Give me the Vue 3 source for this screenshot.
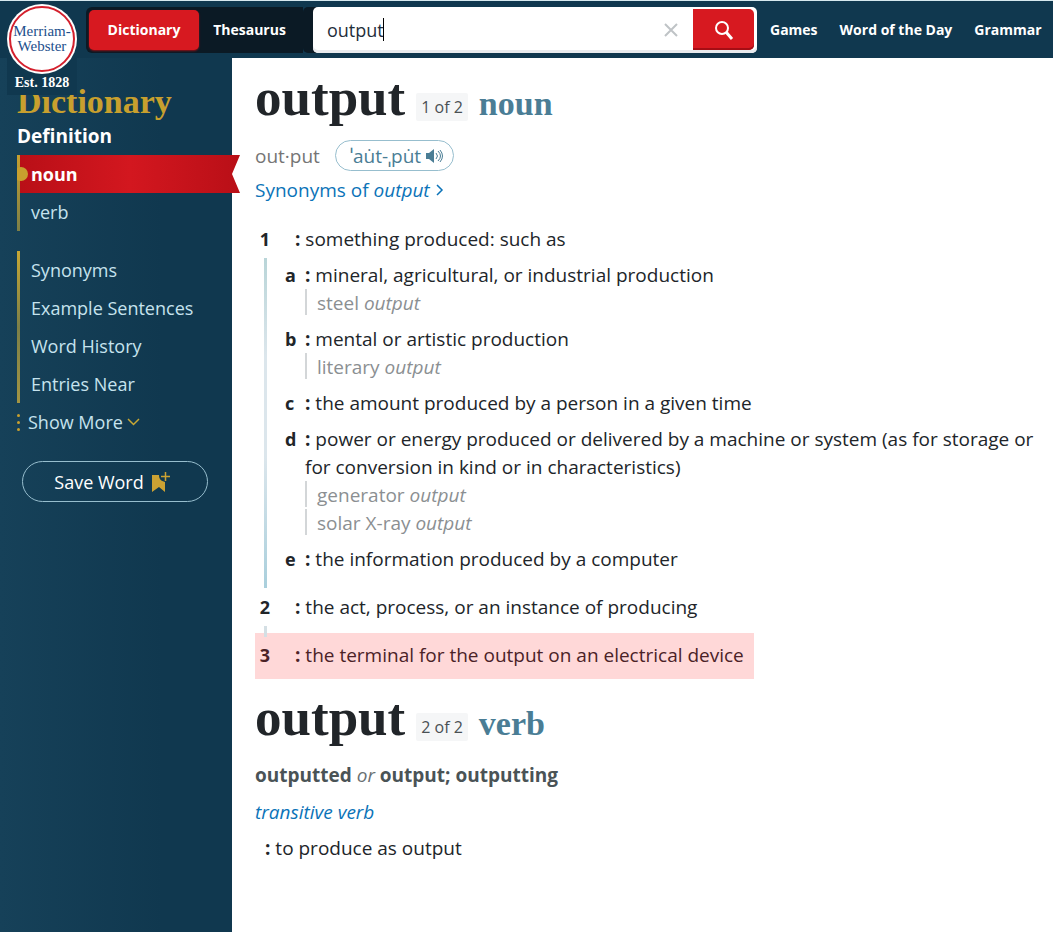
<template>
  <div class="page">
    <header class="header">
      <a href="#" class="logo" aria-label="Merriam-Webster, Est. 1828">
        <span class="logo-circle">
          <span class="logo-ring">Merriam-<br />Webster</span>
        </span>
        <span class="logo-est">Est. 1828</span>
      </a>
      <div class="mode-switch">
        <button type="button" class="mode active">Dictionary</button>
        <button type="button" class="mode">Thesaurus</button>
      </div>
      <form class="search" role="search" @submit.prevent>
        <input v-model="query" class="search-input" type="text" aria-label="Search dictionary" />
        <span class="caret"></span>
        <button type="button" class="search-clear" aria-label="Clear search" @click="query = ''">
          <svg width="14" height="14" viewBox="0 0 14 14">
            <path d="M1 1l12 12M13 1L1 13" fill="none" stroke="#bfc3c6" stroke-width="2" />
          </svg>
        </button>
        <button type="submit" class="search-submit" aria-label="Search">
          <svg width="20" height="20" viewBox="0 0 20 20">
            <circle cx="8" cy="8" r="6" fill="none" stroke="#fff" stroke-width="2" />
            <path d="M12 12l6 7" fill="none" stroke="#fff" stroke-width="3" />
          </svg>
        </button>
      </form>
      <nav class="top-nav">
        <a v-for="link in topLinks" :key="link" href="#">{{ link }}</a>
      </nav>
    </header>

    <div class="body">
      <aside class="sidebar">
        <h2 class="side-title">Dictionary</h2>
        <h3 class="side-heading">Definition</h3>
        <ul class="side-list">
          <li class="current">
            <svg class="ribbon" viewBox="0 0 220 38" preserveAspectRatio="none" aria-hidden="true">
              <defs>
                <linearGradient id="ribbonFill">
                  <stop offset="0" stop-color="#b90f17" />
                  <stop offset="0.5" stop-color="#d3171f" />
                  <stop offset="1" stop-color="#b90f17" />
                </linearGradient>
              </defs>
              <path d="M0 0H220L212 19L220 38H0z" fill="url(#ribbonFill)" />
            </svg>
            <span class="knob"></span>
            <a href="#noun">noun</a>
          </li>
          <li><a href="#verb">verb</a></li>
        </ul>
        <ul class="side-list more">
          <li v-for="item in sections" :key="item"><a href="#">{{ item }}</a></li>
        </ul>
        <button type="button" class="show-more">
          <svg width="3" height="17" viewBox="0 0 3 17" fill="#c8a02e">
            <circle cx="1.5" cy="1.5" r="1.5" />
            <circle cx="1.5" cy="8.5" r="1.5" />
            <circle cx="1.5" cy="15.5" r="1.5" />
          </svg>
          <span>Show More</span>
          <svg width="13" height="8" viewBox="0 0 13 8">
            <path d="M1 1l5.5 5.5L12 1" fill="none" stroke="#c8a834" stroke-width="1.5" />
          </svg>
        </button>
        <button type="button" class="save-word">
          <span>Save Word</span>
          <svg width="18" height="22" viewBox="0 0 18 22">
            <path d="M0 4h7c0 4 2 6 6 7v10l-6-5-7 5z" fill="#cca233" />
            <path d="M13.5 1v9M9 5.500h9" fill="none" stroke="#cca233" stroke-width="1.5" />
          </svg>
        </button>
      </aside>

      <main class="content">
        <section id="noun" class="entry">
          <div class="entry-head">
            <h1 class="headword">output</h1>
            <span class="count">1 of 2</span>
            <h2 class="pos">noun</h2>
          </div>
          <div class="pron-row">
            <span class="syllables">out·put</span>
            <button type="button" class="pron">
              <span>ˈau̇t-ˌpu̇t</span>
              <svg width="17" height="14" viewBox="0 0 17 14">
                <path d="M0 4h3l5-4v14l-5-4H0z" fill="#4a7d95" />
                <path d="M10 4q3 3 0 6M12 2q5 5 0 10M14 1q5 6 0 12" fill="none" stroke="#4a7d95" />
              </svg>
            </button>
          </div>
          <a href="#" class="synonyms">
            <span>Synonyms of <em>output</em></span>
            <svg width="8" height="12" viewBox="0 0 8 12">
              <path d="M1 1l5 5-5 5" fill="none" stroke="#0b73b8" stroke-width="1.5" />
            </svg>
          </a>

          <div class="sense">
            <div class="marker">
              <span class="num">1</span>
              <span class="rail"></span>
            </div>
            <div class="sense-body">
              <p class="definition top"><b>:</b> something produced: such as</p>
              <div v-for="sub in subsenses" :key="sub.letter" class="subsense">
                <b class="letter">{{ sub.letter }}</b>
                <div class="sub-body">
                  <p class="definition"><b>:</b> {{ sub.text }}</p>
                  <p v-for="ex in sub.examples" :key="ex" class="example">{{ ex }} <em>output</em></p>
                </div>
              </div>
            </div>
          </div>
          <div class="sense">
            <div class="marker">
              <span class="num">2</span>
              <span class="rail short"></span>
            </div>
            <p class="definition top"><b>:</b> the act, process, or an instance of producing</p>
          </div>
          <div class="sense highlighted">
            <div class="marker">
              <span class="num">3</span>
            </div>
            <p class="definition top"><b>:</b> the terminal for the output on an electrical device</p>
          </div>
        </section>

        <section id="verb" class="entry">
          <div class="entry-head">
            <h2 class="headword">output</h2>
            <span class="count">2 of 2</span>
            <h2 class="pos">verb</h2>
          </div>
          <p class="inflections"><b>outputted</b> <em>or</em> <b>output; outputting</b></p>
          <p class="transitive"><a href="#">transitive verb</a></p>
          <p class="definition lone"><b>:</b> to produce as output</p>
        </section>
      </main>
    </div>
  </div>
</template>

<script setup>
import { ref } from 'vue';

const query = ref('output');

const topLinks = ['Games', 'Word of the Day', 'Grammar'];

const sections = ['Synonyms', 'Example Sentences', 'Word History', 'Entries Near'];

const subsenses = [
  { letter: 'a', text: 'mineral, agricultural, or industrial production', examples: ['steel'] },
  { letter: 'b', text: 'mental or artistic production', examples: ['literary'] },
  { letter: 'c', text: 'the amount produced by a person in a given time', examples: [] },
  {
    letter: 'd',
    text: 'power or energy produced or delivered by a machine or system (as for storage or for conversion in kind or in characteristics)',
    examples: ['generator', 'solar X-ray']
  },
  { letter: 'e', text: 'the information produced by a computer', examples: [] }
];
</script>

<style>
body {
  background: #fff;
}
</style>

<style scoped>
.page {
  display: flex;
  flex-direction: column;
  min-height: 100vh;
  font-family: "Open Sans", "Noto Sans", sans-serif;
  font-size: 18px;
  line-height: 28px;
  color: #212529;
  overflow-x: hidden;
}

.page * {
  box-sizing: border-box;
}

h1,
h2,
h3,
p,
ul {
  margin: 0;
  padding: 0;
}

ul {
  list-style: none;
}

a {
  color: inherit;
  text-decoration: none;
}

button {
  padding: 0;
  border: 0;
  background: none;
  font: inherit;
  color: inherit;
  cursor: pointer;
}

/* header */
.header {
  position: relative;
  z-index: 2;
  display: flex;
  align-items: center;
  height: 58px;
  padding-left: 86px;
  border-top: 1px solid #d7e9ef;
  background: #10384f;
}

.logo {
  position: absolute;
  top: 3px;
  left: 7px;
  width: 70px;
  height: 91px;
  background: linear-gradient(transparent 54px, #10384f 54px);
  text-align: center;
}

.logo-circle {
  display: block;
  padding: 2px;
  border-radius: 50%;
  background: #fff;
}

.logo-ring {
  display: flex;
  align-items: center;
  justify-content: center;
  height: 66px;
  border: 2px solid #d4202d;
  border-radius: 50%;
  font-family: "Liberation Serif", serif;
  font-size: 15px;
  line-height: 15px;
  white-space: nowrap;
  color: #1d4f8c;
}

.logo-est {
  display: block;
  font-family: "Liberation Serif", serif;
  font-size: 14px;
  line-height: 18px;
  font-weight: 700;
  color: #fff;
}

.mode-switch {
  display: flex;
  flex: none;
  height: 46px;
  padding: 3px;
  border-radius: 6px 0 0 6px;
  background: #0b1a25;
}

.mode {
  width: 101px;
  border-radius: 5px;
  font-size: 14px;
  font-weight: 700;
  color: #fff;
}

.mode.active {
  width: 110px;
  background: #d71920;
  box-shadow: 0 1px 2px #8e1016;
}

.search {
  position: relative;
  display: flex;
  align-items: center;
  flex: 0 1 444px;
  height: 46px;
  margin-left: 10px;
  padding: 2px 3px 2px 14px;
  border-radius: 5px;
  background: #fff;
  box-shadow: -10px 0 0 #0b1a25, inset 0 -3px 0 #e9ebee;
}

.search-input {
  flex: 1;
  min-width: 0;
  padding: 0;
  border: 0;
  outline: 0;
  background: none;
  font: inherit;
  color: #1f2e3a;
}

.caret {
  position: absolute;
  top: 11px;
  left: 70px;
  width: 1px;
  height: 23px;
  background: #000;
}

.search-clear {
  display: flex;
  align-items: center;
  margin-right: 15px;
}

.search-submit {
  display: flex;
  align-items: center;
  justify-content: center;
  width: 61px;
  height: 41px;
  border-radius: 0 5px 5px 0;
  background: #d71920;
  box-shadow: inset 0 -2px 0 #a50d14;
}

.top-nav {
  display: flex;
  gap: 22px;
  margin-left: 13px;
  font-size: 14px;
  font-weight: 700;
  white-space: nowrap;
  color: #fff;
}

.body {
  display: flex;
  flex: 1;
}

/* sidebar */
.sidebar {
  flex: 0 0 232px;
  padding: 24px 0 24px 17px;
  background: linear-gradient(90deg, #164159, #10384f 70%);
  color: #c6e3ee;
}

.side-title {
  font-family: "Liberation Serif", serif;
  font-size: 34px;
  line-height: 40px;
  color: #c8a02e;
}

.side-heading {
  font-size: 19px;
  line-height: 28px;
  margin-bottom: 5px;
  color: #fff;
}

.side-list {
  border-left: 3px solid;
  border-image: linear-gradient(#c8a02e, #7c7f48) 1;
}

.side-list.more {
  margin-top: 20px;
  border-image: linear-gradient(#c8a834, #7c7f48 50%, #a39543) 1;
}

.side-list li {
  position: relative;
  padding: 5px 0 5px 11px;
}

.side-list a {
  position: relative;
}

.current {
  font-weight: 700;
  color: #fff;
}

.ribbon {
  position: absolute;
  top: 0;
  left: 0;
  width: calc(100% + 8px);
  height: 100%;
}

.knob {
  position: absolute;
  top: 12px;
  left: -6px;
  width: 14px;
  height: 14px;
  border-radius: 50%;
  background: #c8a02e;
  clip-path: inset(0 0 0 3px);
}

.show-more {
  display: flex;
  align-items: center;
  height: 38px;
}

.show-more span {
  margin: 0 4px 0 8px;
}

.save-word {
  display: flex;
  align-items: center;
  justify-content: center;
  gap: 8px;
  width: 186px;
  height: 41px;
  margin: 20px 0 0 5px;
  padding-right: 6px;
  border: 1px solid #97bece;
  border-radius: 21px;
  color: #fff;
}

/* entries */
.content {
  flex: 1;
  min-width: 0;
  padding: 9px 12px 24px 23px;
  font-size: 19px;
}

.entry-head {
  display: flex;
  align-items: baseline;
  gap: 11px;
  height: 66px;
}

.headword {
  font-family: "Liberation Serif", serif;
  font-size: 53px;
  line-height: 61px;
  font-weight: 700;
}

.count {
  align-self: flex-start;
  margin-top: 26px;
  padding: 0 5px;
  border-radius: 2px;
  background: #f5f6f7;
  font-size: 16px;
  color: #4a5054;
}

.pos {
  font-family: "Liberation Serif", serif;
  font-size: 34px;
  line-height: 40px;
  color: #4a7d95;
}

.pron-row {
  display: flex;
  align-items: center;
  gap: 15px;
  margin-top: 7px;
  color: #757575;
}

.pron {
  display: flex;
  align-items: center;
  gap: 5px;
  height: 31px;
  padding: 0 10px 0 14px;
  border: 1px solid #97bece;
  border-radius: 16px;
  color: #4a7d95;
}

.synonyms {
  display: inline-flex;
  align-items: center;
  gap: 6px;
  margin: 5px 0 21px;
  color: #0b73b8;
}

.sense {
  display: flex;
  margin-bottom: 20px;
}

.marker {
  display: flex;
  flex-direction: column;
  align-items: center;
  flex: 0 0 20px;
  margin-right: 10px;
}

.num {
  font-size: 18px;
  font-weight: 700;
}

.rail {
  flex: 1;
  width: 3px;
  margin: 5px 0 -15px;
  background: linear-gradient(#b9d5d8, #dce6ec 30%, #dce6ec 60%, #a9cfdc);
}

.rail.short {
  flex: none;
  height: 11px;
  margin: 5px 0 -16px;
  background: #d4dfe4;
}

.definition.top {
  padding-left: 20px;
  text-indent: -10px;
}

.subsense {
  display: flex;
  margin-top: 8px;
}

.letter {
  flex: 0 0 20px;
  font-size: 18px;
}

.example {
  position: relative;
  padding-left: 12px;
  color: #8b8f92;
}

.example::before {
  content: "";
  position: absolute;
  top: 0;
  left: 0;
  width: 2px;
  height: 26px;
  background: #d3d6d8;
}

.sense.highlighted {
  width: fit-content;
  margin: -8px 0 0;
  padding: 8px 10px 10px 0;
  background: rgba(255, 40, 40, 0.18);
  color: #4b2227;
}

.entry + .entry {
  margin-top: 8px;
}

.inflections {
  margin-top: 8px;
  color: #4a5356;
}

.inflections em {
  color: #6a7073;
}

.transitive {
  margin-top: 9px;
  color: #0b73b8;
  font-style: italic;
}

.definition.lone {
  margin-top: 8px;
  padding-left: 10px;
}
</style>
